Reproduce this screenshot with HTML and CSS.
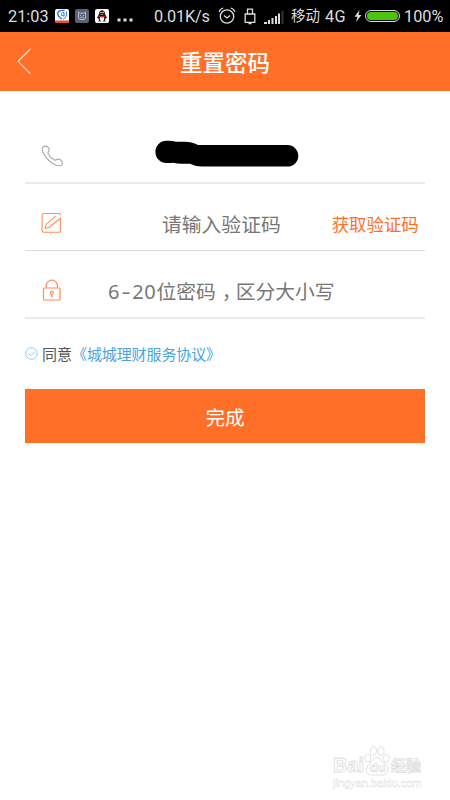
FILE: index.html
```html
<!DOCTYPE html>
<html lang="zh-CN">
<head>
<meta charset="utf-8">
<meta name="viewport" content="width=device-width, initial-scale=1">
<title>重置密码</title>
<link rel="stylesheet" href="styles.css">
</head>
<body>
<div class="status">
  <span class="clock">21:03</span>
  <svg class="app" viewBox="0 0 14 14"><rect width="14" height="14" rx="2" fill="#fff"/><path d="M0 11.500h14v.5a2 2 0 0 1-2 2H2a2 2 0 0 1-2-2z" fill="#ee4b25"/><path d="M9.500 1.500C5 .8 2 2.500 2.800 5.500s2.500 3.500 4.200 4.500" fill="none" stroke="#2878ed" stroke-width="1.400"/><path d="M11.500 2.500c.5 3.500-.5 6-3.500 8M9 3.500C6.500 3.500 6 5 6.500 6.500L9 7z" fill="none" stroke="#2878ed"/></svg>
  <svg class="app" viewBox="0 0 14 14"><rect width="14" height="14" rx="2" fill="#596174"/><path d="M3.500 3l1.500 1.200h4L10.500 3v6.500l-1.500 1H5l-1.500-1zM5 6l1 1M9 6L8 7M5 9l2-1 2 1" fill="none" stroke="#c3c7cf" stroke-width=".9"/></svg>
  <svg class="app" viewBox="0 0 14 14"><rect width="14" height="14" rx="2" fill="#fff"/><path d="M4 5c0-5 6-5 6 0l2 4-1.500.5L10 12H4l-.5-2.500L2 9z" fill="#111"/><ellipse cx="7" cy="9.800" rx="2.300" ry="2.400" fill="#fff"/><path d="M3.800 6.500q3.200 1.700 6.400 0v1.300q-3.200 1.500-6.400 0z" fill="#e72d28"/><circle cx="5.900" cy="3.500" r=".8" fill="#fff"/><circle cx="8.100" cy="3.500" r=".8" fill="#fff"/><path d="M5 5h4l-2 1zM3 12h3.500v1H3zM7.500 12H11v1H7.500z" fill="#f8a51c"/></svg>
  <svg class="dots" viewBox="0 0 16 4"><path d="M.5.500h3v3h-3zM6.500.500h3v3h-3zM12.500.500h3v3h-3z" fill="#ddd"/></svg>
  <span class="speed">0.01K/s</span>
  <svg class="alarm" viewBox="0 0 18 18" fill="none" stroke="#ddd" stroke-width="1.300"><circle cx="9" cy="9.500" r="6.700"/><path d="M1.200 5q.5-3 4-4M16.800 5q-.5-3-4-4M6 8.500L9 11l3-2.500"/></svg>
  <svg class="usb" viewBox="0 0 12 17" fill="none" stroke="#ddd" stroke-width="1.300"><path d="M3.500 6V1.200h5V6M1.200 6h9.600v8.300H1.200zM4.500 15.500h3"/></svg>
  <svg class="signal" viewBox="0 0 20 13"><path d="M0 11h3v2H0zM4 9h2v4H4zM7.500 7h2v6h-2zM11 5h2v8h-2zM14 2.500h2V13h-2z" fill="#ddd"/><path d="M17.500 0h2v13h-2z" fill="#333"/></svg>
  <span class="carrier">移动</span><span class="net">4G</span>
  <svg class="bolt" viewBox="0 0 8 12"><path d="M5.500 0L.5 6.800h3L2 12l5.500-7h-3z" fill="#ddd"/></svg>
  <span class="battery"></span>
  <span class="percent">100%</span>
</div>
<header class="bar">
  <svg class="back" viewBox="0 0 16 27"><path d="M14.500.800L2 13.300l12.500 12.500" fill="none" stroke="#ffe0cf" stroke-width="1.200"/></svg>
  <h1>重置密码</h1>
</header>
<main class="form">
  <div class="row phone">
    <svg class="icon" viewBox="0 0 22 22" fill="none" stroke="#aaa" stroke-width="1.150"><path d="M2.300 1.800Q4.500.200 7 2.200Q9 4.500 7.500 6.400Q6.500 8 7.500 9.500Q9.500 12.700 12.800 14.700Q14.200 15.500 15.700 14.500Q18 13.500 20 15.300Q21.700 17.100 21 20Q17 21.800 12.500 19Q4.700 13.800 1.800 7Q.500 3.800 2.300 1.800Z"/></svg>
    <svg class="redacted" viewBox="0 0 144 27"><path d="M11.500.800Q17 .500 21 1.800H30Q38 2 43 5H132.500A10.800 10.800 0 0 1 132.500 26.600H47Q40 26.500 35 23.800H26Q22 23.800 18 22.800Q15 23.300 11.500 23A11.100 11.100 0 0 1 11.500.800Z"/></svg>
  </div>
  <div class="row code">
    <svg class="icon" viewBox="0 0 22 22" fill="none" stroke="#ff8d58" stroke-width="1.100"><path d="M19.400 6.500v12q0 1.700-1.700 1.700H2.800q-1.700 0-1.700-1.700V3.200q0-1.700 1.700-1.700h14.900q1.700 0 1.700 1.700"/><path d="M4 16.500l1.300-4.300L14.600 4.200M4 16.500l4.300-1.200L20.200 5.800"/></svg>
    <span class="hint">请输入验证码</span>
    <a class="get">获取验证码</a>
  </div>
  <div class="row password">
    <svg class="icon" viewBox="0 0 22 22" fill="none" stroke="#ff8d58" stroke-width="1.200"><rect x="2.500" y="9" width="16.600" height="12" rx="1"/><path d="M5.200 9V6.800a5.600 5.600 0 0 1 11.200 0V9"/><circle cx="10.800" cy="13.800" r="1.500"/><path d="M10.800 15.300v2.900" stroke-width="1.500"/></svg>
    <span class="hint"><span class="digits">6<span class="dash">-</span>20</span>位密码<span class="comma">，</span>区分大小写</span>
  </div>
  <div class="agree">
    <svg class="check" viewBox="0 0 13 13" fill="none" stroke="#8bc6ed" stroke-width=".9"><circle cx="6.500" cy="6.500" r="5.800"/><path d="M3.500 6.500l2.200 2.200 4.500-4.200"/></svg>
    <span class="label">同意</span><a class="terms">《城城理财服务协议》</a>
  </div>
  <button class="submit">完成</button>
</main>
<footer class="mark">
  <div class="brand"><span class="bai">Bai</span><svg class="paw" viewBox="0 0 26 30"><g fill="#fff" stroke="#ddd" stroke-width=".9"><ellipse cx="3.800" cy="12" rx="3" ry="4"/><ellipse cx="9.500" cy="5" rx="3" ry="4.300"/><ellipse cx="17" cy="5.200" rx="3" ry="4.300"/><ellipse cx="22.400" cy="12.300" rx="3" ry="4"/><path d="M13 11.500q3.500 0 5.500 4 6 4.500 5.500 8.500-.5 5.500-6.500 5H8q-6 .5-6-5 0-4 5.500-8.500 2-4 5.500-4z"/></g><text class="du" x="5.500" y="26">du</text></svg><span class="jing">经验</span></div>
  <div class="url">jingyan.baidu.com</div>
</footer>
</body>
</html>
```
FILE: styles.css
```css
* { box-sizing: border-box; }
body {
  margin: 0;
  width: 450px;
  height: 800px;
  display: flex;
  flex-direction: column;
  background: #fff;
  font-family: "Noto Sans CJK SC", sans-serif;
  overflow: hidden;
}
svg { display: block; flex: none; }
.status {
  height: 32px;
  flex: none;
  display: flex;
  align-items: center;
  padding-left: 8px;
  background: #000;
  color: #ddd;
  font-family: Roboto, "Noto Sans CJK SC", sans-serif;
  font-size: 16.3px;
  line-height: 30px;
  white-space: nowrap;
}
.status > span { flex: none; }
.clock, .speed, .carrier, .net, .percent { padding-top: 2px; }
.clock { width: 47px; }
.app { width: 14px; height: 14px; margin-right: 6px; }
.dots { width: 16px; height: 4px; margin: 8px 21px 0 2px; }
.speed { width: 64px; letter-spacing: -.2px; }
.alarm { width: 18px; height: 18px; margin-right: 8px; }
.usb { width: 12px; height: 17px; margin-right: 8px; }
.signal { width: 20px; height: 13px; margin: 3px 7px 0 0; }
.status .carrier { width: 34px; font-size: 14.5px; }
.net { width: 29px; letter-spacing: .4px; }
.bolt { width: 8px; height: 12px; margin-right: 3px; }
.battery {
  width: 35px;
  height: 12px;
  margin-right: 4px;
  border: 1px solid #ddd;
  border-radius: 6px;
  background: #4cc40b content-box;
  padding: 1px;
}
.bar {
  height: 59px;
  flex: none;
  display: grid;
  grid-template-columns: 60px 1fr 60px;
  align-items: center;
  background: #ff6f28;
}
.back { width: 16px; height: 27px; margin: -1px 0 0 16px; }
h1 {
  margin: -2px 0 0;
  text-align: center;
  color: #fff;
  font-size: 22.5px;
  line-height: 32px;
  font-weight: 500;
}
.form { padding: 0 25px; flex: 1; }
.row { display: flex; align-items: flex-start; border-bottom: 1px solid #ddd; }
.icon { width: 22px; height: 22px; margin-left: 16px; }
.phone { height: 93px; padding-top: 49px; border-bottom: 2px solid #ebebeb; }
.phone .icon { margin-top: 5px; }
.redacted { width: 144px; height: 27px; margin-left: 92px; }
.code { height: 67px; padding-top: 28px; }
.hint { color: #777; font-size: 19.8px; line-height: 30px; white-space: nowrap; }
.code .hint { margin: -3px 0 0 99px; }
.get { margin: -3px 0 0 51px; color: #ff6f28; font-size: 17.4px; line-height: 30px; white-space: nowrap; }
.password { height: 68px; padding-top: 28px; border-bottom: 2px solid #ebebeb; }
.password .hint { margin: -3px 0 0 45px; }
.digits { font-family: "Noto Sans", sans-serif; font-size: 20px; letter-spacing: .7px; }
.dash { display: inline-block; width: 12px; letter-spacing: 0; text-align: center; transform: scaleX(1.4); }
.comma { margin: 0 4px 0 6px; font-feature-settings: "halt"; }
.agree { display: flex; align-items: center; height: 70px; padding-bottom: 2px; font-size: 15px; }
.check { width: 13px; height: 13px; margin-right: 4px; }
.label { color: #555; }
.terms { color: #4aa3df; font-size: 15px; white-space: nowrap; letter-spacing: -.1px; }
.submit {
  display: block;
  width: 400px;
  height: 54px;
  padding: 0;
  border: 0;
  background: #ff6f28;
  color: #fff;
  font: 19.5px/56px "Noto Sans CJK SC", sans-serif;
}
.mark { height: 56px; flex: none; padding-left: 333px; color: #fff; -webkit-text-stroke: .8px #ddd; }
.brand { display: flex; height: 32px; align-items: flex-end; }
.bai { width: 31px; font: bold 20px/22px "Liberation Sans", sans-serif; }
.paw { width: 26px; height: 30px; }
.du { font: bold 13px "Liberation Sans", sans-serif; fill: #fff; stroke: #ddd; stroke-width: .7px; -webkit-text-stroke: 0; }
.jing { font-weight: bold; font-size: 15px; line-height: 22px; margin-left: 1px; white-space: nowrap; }
.url { font: 11px/14px "Liberation Sans", sans-serif; color: #fff; -webkit-text-stroke: .4px #ddd; }
```
